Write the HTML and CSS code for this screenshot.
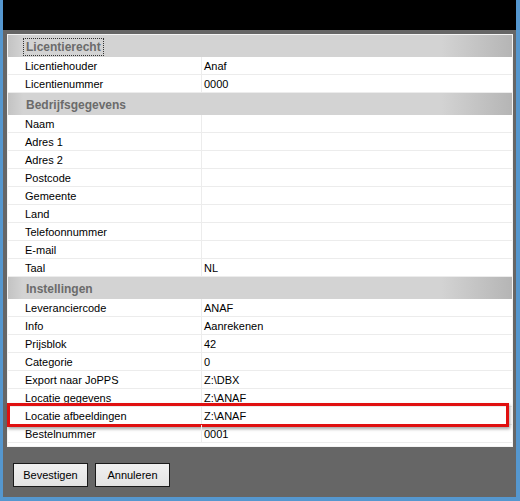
FILE: index.html
```html
<!DOCTYPE html>
<html>
<head>
<meta charset="utf-8">
<link rel="stylesheet" href="styles.css">
</head>
<body>
<div class="window">
  <div class="titlebar"></div>
  <div class="frame">
    <div class="grid">
      <div class="section"><span class="section-title focused">Licentierecht</span></div>
      <div class="row"><span class="label">Licentiehouder</span><span class="value">Anaf</span></div>
      <div class="row"><span class="label">Licentienummer</span><span class="value">0000</span></div>
      <div class="section"><span class="section-title">Bedrijfsgegevens</span></div>
      <div class="row"><span class="label">Naam</span><span class="value"></span></div>
      <div class="row"><span class="label">Adres 1</span><span class="value"></span></div>
      <div class="row"><span class="label">Adres 2</span><span class="value"></span></div>
      <div class="row"><span class="label">Postcode</span><span class="value"></span></div>
      <div class="row"><span class="label">Gemeente</span><span class="value"></span></div>
      <div class="row"><span class="label">Land</span><span class="value"></span></div>
      <div class="row"><span class="label">Telefoonnummer</span><span class="value"></span></div>
      <div class="row"><span class="label">E-mail</span><span class="value"></span></div>
      <div class="row"><span class="label">Taal</span><span class="value">NL</span></div>
      <div class="section"><span class="section-title">Instellingen</span></div>
      <div class="row"><span class="label">Leveranciercode</span><span class="value">ANAF</span></div>
      <div class="row"><span class="label">Info</span><span class="value">Aanrekenen</span></div>
      <div class="row"><span class="label">Prijsblok</span><span class="value">42</span></div>
      <div class="row"><span class="label">Categorie</span><span class="value">0</span></div>
      <div class="row"><span class="label">Export naar JoPPS</span><span class="value">Z:\DBX</span></div>
      <div class="row"><span class="label">Locatie gegevens</span><span class="value">Z:\ANAF</span></div>
      <div class="row highlighted"><span class="label">Locatie afbeeldingen</span><span class="value">Z:\ANAF</span><span class="marker"></span></div>
      <div class="row"><span class="label">Bestelnummer</span><span class="value">0001</span></div>
    </div>
  </div>
  <div class="buttons">
    <button class="btn">Bevestigen</button>
    <button class="btn">Annuleren</button>
  </div>
</div>
</body>
</html>
```
FILE: styles.css
```css
html, body {
  margin: 0;
  padding: 0;
  background: #000;
}
.window {
  width: 520px;
  height: 501px;
  box-sizing: border-box;
  border-left: 3px solid #5597cf;
  border-right: 4px solid #5597cf;
  border-bottom: 4px solid #5597cf;
  background: #666666;
  display: flex;
  flex-direction: column;
  font-family: "Liberation Sans", Arial, sans-serif;
  font-size: 11px;
  color: #000;
}
.titlebar {
  height: 30px;
  background: #000;
  flex: none;
}
.frame {
  padding: 4px 3px 0 4px;
  flex: none;
}
.grid {
  background: #fff;
  border: 1px solid #f4f4f4;
  padding-bottom: 3px;
  position: relative;
}
.section {
  height: 22px;
  box-sizing: border-box;
  padding-top: 1px;
  display: flex;
  align-items: center;
  padding-left: 16px;
  background: linear-gradient(to right, #c3c3c3 0, #d3d3d3 3%, #d3d3d3 86%, #b5b5b5 100%);
}
.section-title {
  font-weight: bold;
  font-size: 12px;
  color: #6b6b6b;
  padding: 1px 2px;
  line-height: 14px;
}
.section-title.focused {
  outline: 1px dotted #333;
  outline-offset: 0;
}
.row {
  height: 18px;
  box-sizing: border-box;
  border-bottom: 1px solid #ececec;
  display: flex;
  align-items: stretch;
  position: relative;
}
.label {
  width: 193px;
  padding: 3px 0 0 17px;
  box-sizing: border-box;
  flex: none;
  line-height: 13px;
}
.value {
  flex: 1;
  border-left: 1px solid #ececec;
  padding: 3px 0 0 2px;
  line-height: 13px;
}
.marker {
  position: absolute;
  left: -1px;
  right: 3px;
  top: -4px;
  bottom: -3px;
  border: 3px solid #e01010;
  box-shadow: 1px 2px 3px rgba(0,0,0,0.35);
  pointer-events: none;
}
.buttons {
  flex: 1;
  display: flex;
  align-items: flex-start;
  gap: 7px;
  padding: 16px 0 0 10px;
}
.btn {
  font-family: "Liberation Sans", Arial, sans-serif;
  font-size: 11px;
  color: #000;
  height: 24px;
  width: 75px;
  background: linear-gradient(#f0f0f0, #e3e3e3);
  border: 1px solid #1a1a1a;
  padding: 0;
  margin: 0;
}
```
